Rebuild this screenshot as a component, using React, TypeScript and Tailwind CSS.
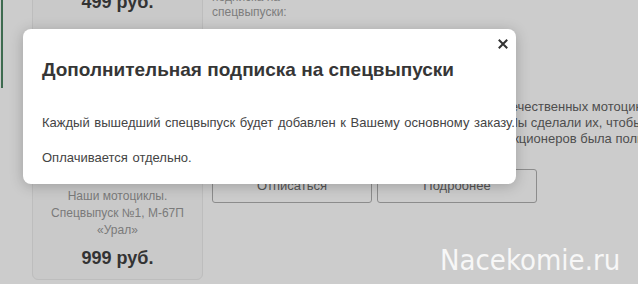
import React from "react";

export default function App() {
  return (
    <div className="relative w-[638px] h-[284px] overflow-hidden bg-[#cccccc] font-['Liberation_Sans',Arial,sans-serif]">
      {/* page behind the overlay */}
      <div className="flex h-full">
        <div className="ml-[1px] w-[2px] h-[88px] shrink-0 bg-[#3e6b50]" />
        <div className="w-[29px] shrink-0 pt-[61px] pl-[21px] text-[20px] leading-[24px] font-bold text-[#3a3a3a] whitespace-nowrap">
          Д
        </div>
        <div className="w-[171px] h-[292px] -mt-[12px] shrink-0 flex flex-col items-center border border-[#bdbdbd] rounded-[6px] bg-[#c9c9c9]">
          <div className="pt-[2px] text-[18px] leading-[22px] font-bold text-[#333333]">499 руб.</div>
          <div className="mt-[175px] text-[12px] leading-[17px] text-[#7a7a7a] text-center">
            <div>Наши мотоциклы.</div>
            <div>Спецвыпуск №1, М-67П</div>
            <div>«Урал»</div>
          </div>
          <div className="mt-[8px] text-[18px] leading-[22px] font-bold text-[#333333]">999 руб.</div>
        </div>
        <div className="ml-[9px] flex flex-col min-w-0 flex-1">
          <div className="-mt-[10px] text-[12px] leading-[15px] text-[#7d7d7d]">
            <div>подписка на</div>
            <div>спецвыпуски:</div>
          </div>
          <div className="mt-[79px] text-[13px] leading-[16px] text-[#4e4e4e] whitespace-nowrap">
            <div className="pl-[286px]">отечественных мотоциклов СССР.</div>
            <div className="pl-[295px]">Мы сделали их, чтобы ваша</div>
            <div className="pl-[266px]">коллекционеров была полной.</div>
          </div>
          <div className="mt-[22px] flex gap-[5px]">
            <div className="w-[160px] h-[34px] flex items-center justify-center border border-[#8c8c8c] rounded-[3px] text-[13px] text-[#555555]">
              Отписаться
            </div>
            <div className="w-[160px] h-[34px] flex items-center justify-center border border-[#8c8c8c] rounded-[3px] text-[13px] text-[#555555]">
              Подробнее
            </div>
          </div>
          <div className="mt-[43px] ml-[228px] text-[29px] leading-[29px] text-[#f7f7f7] whitespace-nowrap font-['DejaVu_Sans_Condensed','DejaVu_Sans',sans-serif] font-stretch-condensed">
            Nacekomie.ru
          </div>
        </div>
      </div>

      {/* modal */}
      <div className="absolute left-[23px] top-[29px] w-[493px] h-[155px] bg-white rounded-[8px] shadow-[0_2px_14px_rgba(0,0,0,0.22)] pl-[19px] pt-[30px]">
        <button className="absolute right-[8px] top-[10px] w-[10px] h-[10px] flex items-center justify-center">
          <svg width="10" height="10" viewBox="0 0 10 10">
            <path d="M1.5 1.5 L8.5 8.5 M8.5 1.5 L1.5 8.5" stroke="#333333" strokeWidth="2" strokeLinecap="square" />
          </svg>
        </button>
        <div className="text-[19px] leading-[22px] font-bold text-[#363636] whitespace-nowrap">
          Дополнительная подписка на спецвыпуски
        </div>
        <div className="mt-[34px] text-[13px] leading-[16px] [word-spacing:1px] text-[#444444] whitespace-nowrap">
          Каждый вышедший спецвыпуск будет добавлен к Вашему основному заказу.
        </div>
        <div className="mt-[19px] text-[13px] leading-[16px] [word-spacing:1px] text-[#444444] whitespace-nowrap">
          Оплачивается отдельно.
        </div>
      </div>
    </div>
  );
}
